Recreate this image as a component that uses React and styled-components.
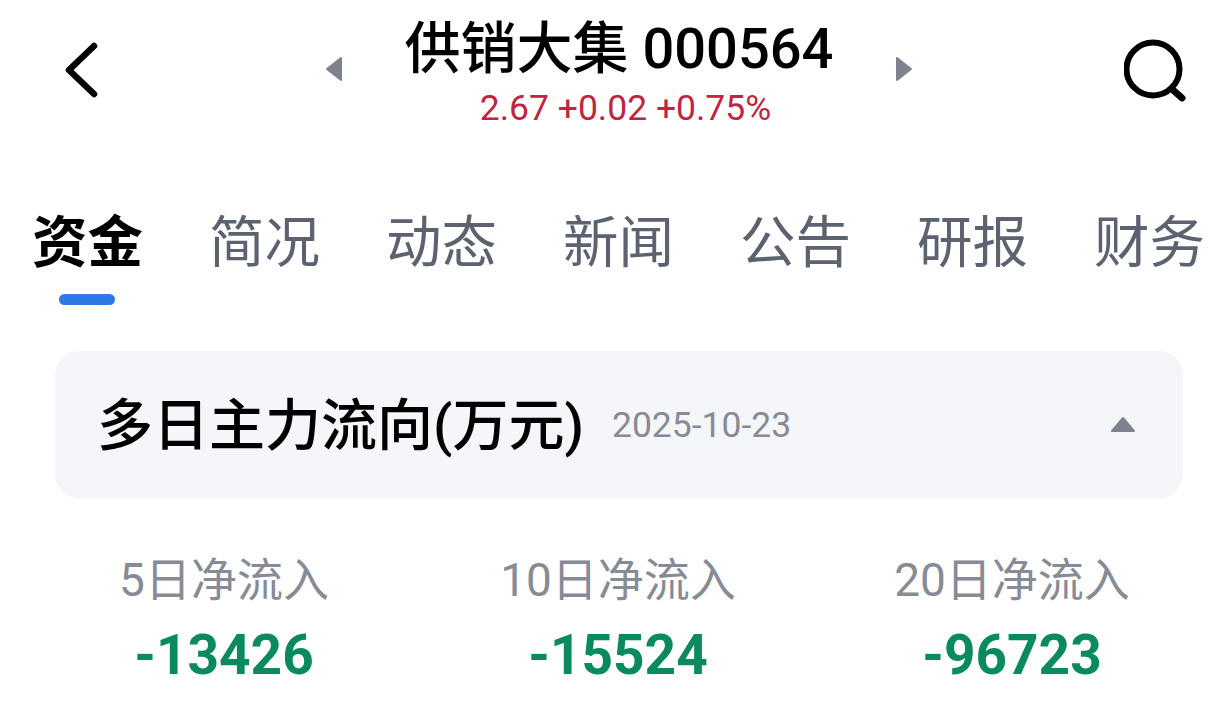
import React from 'react';
import styled, { createGlobalStyle } from 'styled-components';

const GlobalStyle = createGlobalStyle`
    html, body {
        margin: 0;
        padding: 0;
        background: #fff;
        font-family: Roboto, "Noto Sans CJK SC", sans-serif;
    }
`;

const Page = styled.div`
    width: 1215px;
    height: 719px;
    overflow: hidden;
    background: #fff;
`;

const Header = styled.div`
    height: 138px;
    padding: 0 27px 0 62px;
    display: flex;
    align-items: flex-start;
    justify-content: space-between;
`;

const HeaderIcon = styled.svg`
    margin-top: ${(p) => p.$top}px;
    display: block;
`;

const Switcher = styled.div`
    margin-left: 16px;
    display: flex;
    align-items: flex-start;
    gap: 62px;
`;

const Arrow = styled.svg`
    margin-top: 56px;
    display: block;
`;

const TitleBox = styled.div`
    display: flex;
    flex-direction: column;
    align-items: center;
    padding-top: 14px;
`;

const Title = styled.div`
    font-size: 56px;
    line-height: 70px;
    font-weight: 500;
    color: #000;
    white-space: nowrap;
`;

const Quote = styled.div`
    margin: 4px 0 0 13px;
    font-size: 35.5px;
    line-height: 40px;
    color: #c0243e;
    white-space: nowrap;
`;

const Tabs = styled.div`
    display: flex;
    gap: 66px;
    padding: 70px 0 0 32px;
    white-space: nowrap;
`;

const Tab = styled.div`
    position: relative;
    font-size: 55.5px;
    line-height: 72px;
    font-weight: ${(p) => (p.$active ? 700 : 400)};
    color: ${(p) => (p.$active ? '#000' : '#5c6270')};
`;

const TabLine = styled.div`
    position: absolute;
    left: 27px;
    top: 86px;
    width: 56px;
    height: 11px;
    border-radius: 6px;
    background: #2f78e8;
`;

const Section = styled.div`
    margin: 71px 32px 0 55px;
    height: 147px;
    padding: 0 47px 0 42px;
    border-radius: 24px;
    background: #f5f6fa;
    display: flex;
    align-items: center;
`;

const SectionTitle = styled.div`
    padding-bottom: 8px;
    font-size: 56px;
    font-weight: 500;
    color: #000;
    white-space: nowrap;
`;

const SectionDate = styled.div`
    margin-left: 28px;
    font-size: 35.5px;
    color: #878b96;
    white-space: nowrap;
`;

const Collapse = styled.svg`
    margin-left: auto;
    display: block;
`;

const Stats = styled.div`
    display: grid;
    grid-template-columns: repeat(3, 394px);
    margin: 52px 0 0 27px;
`;

const Stat = styled.div`
    display: flex;
    flex-direction: column;
    align-items: center;
`;

const StatLabel = styled.div`
    font-size: 46px;
    line-height: 60px;
    color: #878b96;
    white-space: nowrap;
`;

const StatValue = styled.div`
    font-size: 55px;
    line-height: 90px;
    font-weight: 700;
    color: #0b8a5f;
`;

const tabs = ['资金', '简况', '动态', '新闻', '公告', '研报', '财务'];

const stats = [
    { label: '5日净流入', value: '-13426' },
    { label: '10日净流入', value: '-15524' },
    { label: '20日净流入', value: '-96723' },
];

const App = () => (
    <Page>
        <GlobalStyle />
        <Header>
            <HeaderIcon $top={40} width="36" height="60" viewBox="0 0 36 60" fill="none">
                <path d="M32 6 L7 30 L32 54" stroke="#000" strokeWidth="6.5" strokeLinecap="round" strokeLinejoin="round" />
            </HeaderIcon>
            <Switcher>
                <Arrow width="18" height="26" viewBox="0 0 18 26">
                    <path d="M16 2 L2 13 L16 24 Z" fill="#7e828f" stroke="#7e828f" strokeWidth="2" strokeLinejoin="round" />
                </Arrow>
                <TitleBox>
                    <Title>供销大集 000564</Title>
                    <Quote>2.67 +0.02 +0.75%</Quote>
                </TitleBox>
                <Arrow width="18" height="26" viewBox="0 0 18 26">
                    <path d="M2 2 L16 13 L2 24 Z" fill="#7e828f" stroke="#7e828f" strokeWidth="2" strokeLinejoin="round" />
                </Arrow>
            </Switcher>
            <HeaderIcon $top={39} width="64" height="64" viewBox="0 0 64 64" fill="none">
                <circle cx="29" cy="30" r="26.5" stroke="#000" strokeWidth="6" />
                <path d="M49 51 L58 59" stroke="#000" strokeWidth="7" strokeLinecap="round" />
            </HeaderIcon>
        </Header>
        <Tabs>
            {tabs.map((t, i) => (
                <Tab key={t} $active={i === 0}>
                    {t}
                    {i === 0 && <TabLine />}
                </Tab>
            ))}
        </Tabs>
        <Section>
            <SectionTitle>多日主力流向(万元)</SectionTitle>
            <SectionDate>2025-10-23</SectionDate>
            <Collapse width="26" height="20" viewBox="0 0 26 20">
                <path d="M13 3 L24 16 L2 16 Z" fill="#7e828f" stroke="#7e828f" strokeWidth="2" strokeLinejoin="round" />
            </Collapse>
        </Section>
        <Stats>
            {stats.map((s) => (
                <Stat key={s.label}>
                    <StatLabel>{s.label}</StatLabel>
                    <StatValue>{s.value}</StatValue>
                </Stat>
            ))}
        </Stats>
    </Page>
);

export default App;
